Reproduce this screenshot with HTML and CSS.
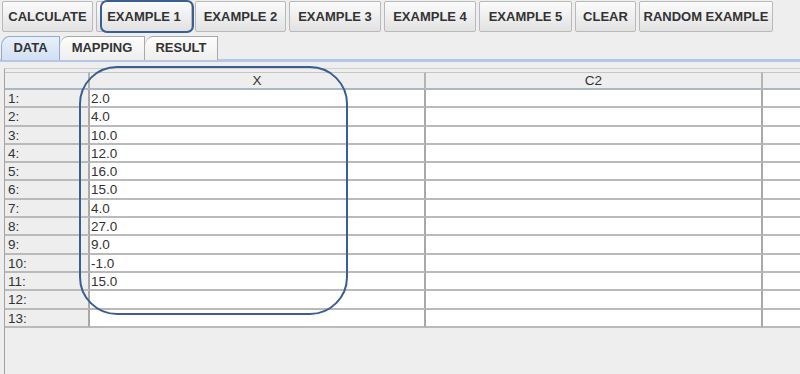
FILE: index.html
```html
<!DOCTYPE html>
<html lang="en">
<head>
	<meta charset="UTF-8" />
	<title>data</title>
	<link rel="stylesheet" href="styles.css">
</head>
<body>
	<div class="toolbar">
		<button class="btn w91">CALCULATE</button>
		<button class="btn w96 picked">EXAMPLE 1<span class="ring"></span></button>
		<button class="btn w91">EXAMPLE 2</button>
		<button class="btn w92">EXAMPLE 3</button>
		<button class="btn w92">EXAMPLE 4</button>
		<button class="btn w93">EXAMPLE 5</button>
		<button class="btn w61">CLEAR</button>
		<button class="btn w134">RANDOM EXAMPLE</button>
	</div>

	<ul class="tab-title">
		<li class="active w58">DATA</li>
		<li class="w85">MAPPING</li>
		<li class="w73">RESULT</li>
	</ul>

	<div class="pane">
		<div class="sheet">
			<div class="hd"></div><div class="hd">X</div><div class="hd">C2</div><div class="hd"></div>
			<div class="rh">1:</div><div class="c">2.0</div><div class="c"></div><div class="c"></div>
			<div class="rh">2:</div><div class="c">4.0</div><div class="c"></div><div class="c"></div>
			<div class="rh">3:</div><div class="c">10.0</div><div class="c"></div><div class="c"></div>
			<div class="rh">4:</div><div class="c">12.0</div><div class="c"></div><div class="c"></div>
			<div class="rh">5:</div><div class="c">16.0</div><div class="c"></div><div class="c"></div>
			<div class="rh">6:</div><div class="c">15.0</div><div class="c"></div><div class="c"></div>
			<div class="rh">7:</div><div class="c">4.0</div><div class="c"></div><div class="c"></div>
			<div class="rh">8:</div><div class="c">27.0</div><div class="c"></div><div class="c"></div>
			<div class="rh">9:</div><div class="c">9.0</div><div class="c"></div><div class="c"></div>
			<div class="rh">10:</div><div class="c">-1.0</div><div class="c"></div><div class="c"></div>
			<div class="rh">11:</div><div class="c">15.0</div><div class="c"></div><div class="c"></div>
			<div class="rh">12:</div><div class="c"></div><div class="c"></div><div class="c"></div>
			<div class="rh">13:</div><div class="c"></div><div class="c"></div><div class="c"></div>
		</div>
	</div>

	<div class="mark"></div>
</body>
</html>
```

FILE: styles.css
```css
*{padding: 0;margin: 0;box-sizing: border-box;}
body{
	width: 800px;
	height: 374px;
	overflow: hidden;
	background: #eeeeee;
	font-family: "Liberation Sans", Arial, sans-serif;
	color: #333;
	position: relative;
}

/* buttons */
.toolbar{display: flex;gap: 3px;padding: 1px 0 0 2px;height: 36px;}
.btn{
	position: relative;
	height: 31px;
	border: 1px solid #b9b9b9;
	border-radius: 2px;
	background: linear-gradient(#fbfbfb, #ececec 60%, #e2e2e2);
	font: bold 13px "Liberation Sans", Arial, sans-serif;
	color: #333;
	text-align: center;
	padding: 0;
}
.w91{width: 91px;}
.w92{width: 92px;}
.w93{width: 93px;}
.w96{width: 96px;}
.w61{width: 61px;}
.w134{width: 134px;}
.ring{
	position: absolute;
	left: 3px;
	right: -3px;
	top: -2px;
	bottom: -2px;
	border: 2px solid #3b5e92;
	border-radius: 7px;
}

/* tabs */
.tab-title{display: flex;list-style: none;padding-left: 1px;height: 26px;border-bottom: 3px solid #b4c8e4;}
.tab-title li{
	height: 24px;
	line-height: 22px;
	margin-top: 0;
	text-align: center;
	font-weight: bold;
	font-size: 13px;
	background: linear-gradient(#fdfdfd, #eeeeee);
	border: 1px solid #a9a9a9;
	border-bottom: none;
	border-left: none;
	border-top-left-radius: 8px 10px;
}
.tab-title li:first-child{border-left: 1px solid #a9a9a9;}
.tab-title li.active{
	background: linear-gradient(#e8f0fa, #d2e0f2);
	border-color: #93abcb;
}
.w58{width: 59px;}
.w85{width: 85px;}
.w73{width: 73px;}

/* table */
.pane{
	margin: 6px 0 0 4px;
	height: 320px;
	border-left: 1px solid #a3a3a3;
	border-top: 1px solid #cfcfcf;
	padding-top: 3px;
	overflow: hidden;
}
.sheet{
	display: grid;
	grid-template-columns: 85px 336px 337px 60px;
	grid-template-rows: 18px repeat(13, 18.3px);
	font-size: 13.5px;
}
.sheet div{
	border-right: 2px solid #a9a9a9;
	border-bottom: 2px solid #bababa;
	white-space: nowrap;
	line-height: 17px;
}
.hd{
	background: #eeeeee;
	text-align: center;
	border-top: 1px solid #c5c5c5;
	border-bottom-color: #a9b7c9 !important;
	border-right-color: #b4b4b4 !important;
	line-height: 16px !important;
}
.rh{background: #eeeeee;padding-left: 3px;}
.c{background: #fff;padding-left: 1px;}

/* annotation */
.mark{
	position: absolute;
	left: 79px;
	top: 66px;
	width: 269px;
	height: 249px;
	border: 2px solid #3b5e92;
	border-radius: 38px;
}
```
